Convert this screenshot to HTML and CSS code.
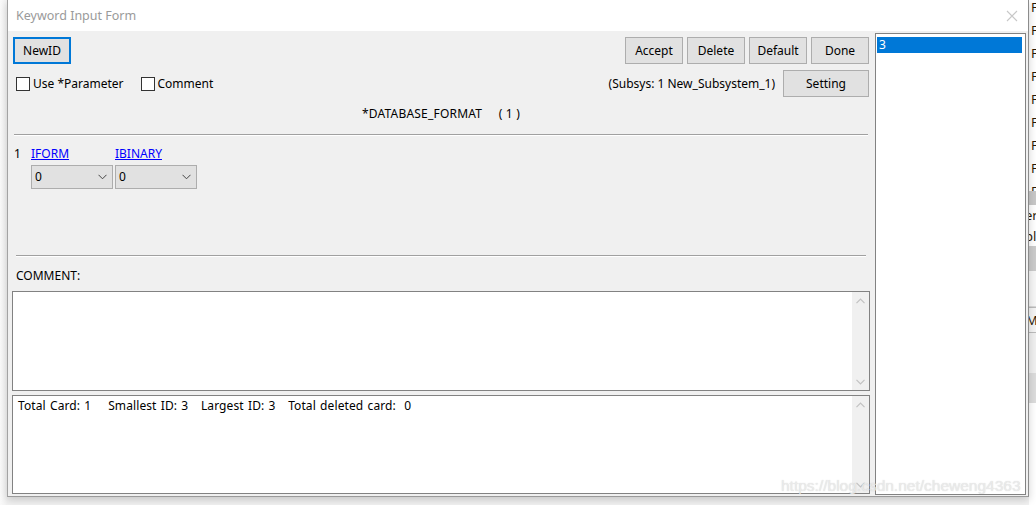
FILE: index.html
```html
<!DOCTYPE html>
<html lang="en">
<head>
    <meta charset="UTF-8">
    <title>Keyword Input Form</title>
    <link rel="stylesheet" href="styles.css">
</head>
<body>
    <div class="screen">
        <div class="window">
            <div class="titlebar">
                <span class="title">Keyword Input Form</span>
                <svg class="close" width="12" height="12" viewBox="0 0 12 12">
                    <path d="M1 1 L11 11 M11 1 L1 11" stroke="#c8c8c8" stroke-width="1.1" fill="none"/>
                </svg>
            </div>
            <div class="client">
                <div class="form">
                    <div class="row top-row">
                        <button class="btn btn-focus">NewID</button>
                        <div class="actions">
                            <button class="btn">Accept</button>
                            <button class="btn">Delete</button>
                            <button class="btn">Default</button>
                            <button class="btn">Done</button>
                        </div>
                    </div>
                    <div class="row opts-row">
                        <div class="checks">
                            <label class="check"><span class="box"></span>Use *Parameter</label>
                            <label class="check"><span class="box"></span>Comment</label>
                        </div>
                        <div class="subsys">
                            <span>(Subsys: 1 New_Subsystem_1)</span>
                            <button class="btn setting">Setting</button>
                        </div>
                    </div>
                    <div class="kw-title">*DATABASE_FORMAT&nbsp;&nbsp;&nbsp;&nbsp; ( 1 )</div>
                    <div class="sep"></div>
                    <div class="params">
                        <span class="card-no">1</span>
                        <a class="field-link" href="#">IFORM</a>
                        <a class="field-link" href="#">IBINARY</a>
                        <span></span>
                        <div class="combo"><span>0</span>
                            <svg width="9" height="6" viewBox="0 0 9 6"><path d="M0.5 0.8 L4.5 4.8 L8.5 0.8" stroke="#444" stroke-width="1" fill="none"/></svg>
                        </div>
                        <div class="combo"><span>0</span>
                            <svg width="9" height="6" viewBox="0 0 9 6"><path d="M0.5 0.8 L4.5 4.8 L8.5 0.8" stroke="#444" stroke-width="1" fill="none"/></svg>
                        </div>
                    </div>
                    <div class="sep sep-low"></div>
                    <div class="comment-label">COMMENT:</div>
                    <div class="textbox comment-box">
                        <div class="textarea"></div>
                        <div class="vscroll">
                            <svg width="9" height="6" viewBox="0 0 9 6"><path d="M0.5 5.2 L4.5 1.2 L8.5 5.2" stroke="#c2c2c2" stroke-width="1.2" fill="none"/></svg>
                            <svg width="9" height="6" viewBox="0 0 9 6"><path d="M0.5 0.8 L4.5 4.8 L8.5 0.8" stroke="#c2c2c2" stroke-width="1.2" fill="none"/></svg>
                        </div>
                    </div>
                    <div class="textbox status-box">
                        <div class="textarea status-text">Total Card: 1    Smallest ID: 3   Largest ID: 3   Total deleted card:  0</div>
                        <div class="vscroll">
                            <svg width="9" height="6" viewBox="0 0 9 6"><path d="M0.5 5.2 L4.5 1.2 L8.5 5.2" stroke="#c2c2c2" stroke-width="1.2" fill="none"/></svg>
                            <svg width="9" height="6" viewBox="0 0 9 6"><path d="M0.5 0.8 L4.5 4.8 L8.5 0.8" stroke="#c2c2c2" stroke-width="1.2" fill="none"/></svg>
                        </div>
                    </div>
                </div>
                <div class="id-list">
                    <div class="id-item selected">3</div>
                </div>
            </div>
        </div>
        <div class="behind">
            <div class="f-rows">
                <span>F</span><span>F</span><span>F</span><span>F</span><span>F</span><span>F</span><span>F</span><span>F</span><span>F</span>
            </div>
            <div class="band band-gray"></div>
            <div class="b-text"><span>eri</span><span>pl</span></div>
            <div class="band band-gray2"></div>
            <div class="band band-light"></div>
            <div class="b-mo">Mo</div>
            <div class="band band-soft"></div>
            <div class="band band-mid"></div>
        </div>
        <div class="watermark">https://blog.csdn.net/cheweng4363</div>
    </div>
</body>
</html>
```

FILE: styles.css
```css
html, body {
    margin: 0;
    padding: 0;
}
body {
    background: #f4f4f4;
    font-family: "Noto Sans", "Liberation Sans", sans-serif;
    font-size: 12px;
    color: #000;
}
.screen {
    position: relative;
    width: 1036px;
    height: 505px;
    display: flex;
    padding-left: 7px;
    box-sizing: border-box;
    overflow: hidden;
    background: linear-gradient(to right, #fafafa, #f2f2f2 7px);
}
.window {
    width: 1022px;
    height: 497px;
    box-sizing: border-box;
    border-left: 1px solid #a3a3a3;
    border-right: 1px solid #8c8c8c;
    border-bottom: 1px solid #9a9a9a;
    box-shadow: 0 3px 8px rgba(0,0,0,0.18);
    display: flex;
    flex-direction: column;
    position: relative;
    z-index: 1;
}
.titlebar {
    height: 31px;
    background: #fff;
    display: flex;
    align-items: center;
    justify-content: space-between;
    padding: 0 10px 0 8px;
    flex: none;
}
.title {
    color: #9a9a9a;
    font-size: 12.5px;
}
.client {
    flex: 1;
    background: #f0f0f0;
    display: flex;
    padding: 0 2px 0 4px;
    gap: 5px;
}
.form {
    width: 858px;
    display: flex;
    flex-direction: column;
    padding-top: 6px;
}
.row {
    display: flex;
    justify-content: space-between;
    align-items: center;
    height: 27px;
}
.top-row {
    padding: 0 1px;
}
.opts-row {
    margin-top: 6px;
    padding-right: 1px;
}
.btn {
    font: inherit;
    height: 27px;
    width: 58px;
    background: #e1e1e1;
    border: 1px solid #adadad;
    padding: 0;
    color: #000;
}
.btn-focus {
    border: 2px solid #0078d7;
}
.actions {
    display: flex;
    gap: 4px;
}
.checks {
    display: flex;
    gap: 17px;
    padding-left: 4px;
}
.check {
    display: flex;
    align-items: center;
    gap: 3px;
}
.box {
    width: 12px;
    height: 12px;
    border: 1px solid #333;
    background: #fff;
}
.subsys {
    display: flex;
    align-items: center;
    gap: 8px;
}
.setting {
    width: 86px;
}
.kw-title {
    text-align: center;
    margin-top: 9px;
    line-height: 16px;
    letter-spacing: 0.2px;
}
.sep {
    margin: 12px 2px 0;
    border-top: 1px solid #a0a0a0;
    border-bottom: 1px solid #fff;
}
.sep-low {
    margin: 66px 4px 0 4px;
}
.params {
    display: grid;
    grid-template-columns: 15px 82px 82px;
    column-gap: 2px;
    row-gap: 3px;
    margin-top: 10px;
    padding-left: 2px;
    line-height: 16px;
    justify-content: start;
}
.field-link {
    color: #0000ff;
    text-decoration: underline;
    justify-self: start;
}
.combo {
    height: 24px;
    box-sizing: border-box;
    background: #e1e1e1;
    border: 1px solid #adadad;
    display: flex;
    align-items: center;
    justify-content: space-between;
    padding: 0 5px 0 3px;
}
.comment-label {
    margin: 11px 0 0 4px;
    line-height: 16px;
}
.textbox {
    display: flex;
    border: 1px solid #828282;
    background: #fff;
    box-sizing: border-box;
}
.comment-box {
    margin-top: 7px;
    height: 100px;
}
.status-box {
    margin-top: 4px;
    height: 99px;
}
.textarea {
    flex: 1;
}
.status-text {
    white-space: pre;
    padding: 2px 5px;
    line-height: 16px;
    word-spacing: 1px;
    letter-spacing: 0.1px;
}
.vscroll {
    width: 17px;
    background: #f0f0f0;
    display: flex;
    flex-direction: column;
    justify-content: space-between;
    align-items: center;
    padding: 6px 0 5px;
}
.id-list {
    width: 151px;
    margin: 2px 0 1px;
    box-sizing: border-box;
    background: #fff;
    border: 1px solid #828282;
    padding: 3px 3px 0 1px;
}
.id-item {
    height: 16px;
    line-height: 15px;
    padding-left: 2px;
}
.id-item.selected {
    background: #0078d7;
    color: #fff;
}
.behind {
    width: 7px;
    height: 505px;
    background: #fff;
    overflow: hidden;
    display: flex;
    flex-direction: column;
    font-size: 13px;
    color: #2a1a08;
}
.f-rows {
    display: flex;
    flex-direction: column;
    height: 191px;
    flex: none;
    overflow: hidden;
    padding-left: 2px;
}
.f-rows span {
    flex: none;
    height: 23px;
    line-height: 14px;
}
.band {
    flex: none;
}
.band-gray {
    height: 14px;
    background: #c8c8c8;
}
.b-text {
    flex: none;
    height: 41px;
    display: flex;
    flex-direction: column;
    justify-content: space-around;
    white-space: nowrap;
    margin-left: -4px;
}
.band-gray2 {
    height: 25px;
    background: #cbcbcb;
}
.band-light {
    height: 35px;
    background: #f7f7f7;
    border-bottom: 1px solid #d8d8d8;
}
.b-mo {
    flex: none;
    height: 24px;
    line-height: 24px;
    margin-left: -3px;
    background: #f4f4f4;
    border-top: 1px solid #bbb;
    border-bottom: 1px solid #bbb;
}
.band-soft {
    height: 40px;
    background: #f0f0f0;
}
.band-mid {
    height: 30px;
    background: #dcdcdc;
}
.watermark {
    position: absolute;
    left: 781px;
    top: 477px;
    z-index: 2;
    font-size: 15.5px;
    font-family: "Liberation Sans", sans-serif;
    color: rgba(238,238,238,0.85);
    text-shadow: 0 0 1px rgba(120,120,120,0.35);
}
```
